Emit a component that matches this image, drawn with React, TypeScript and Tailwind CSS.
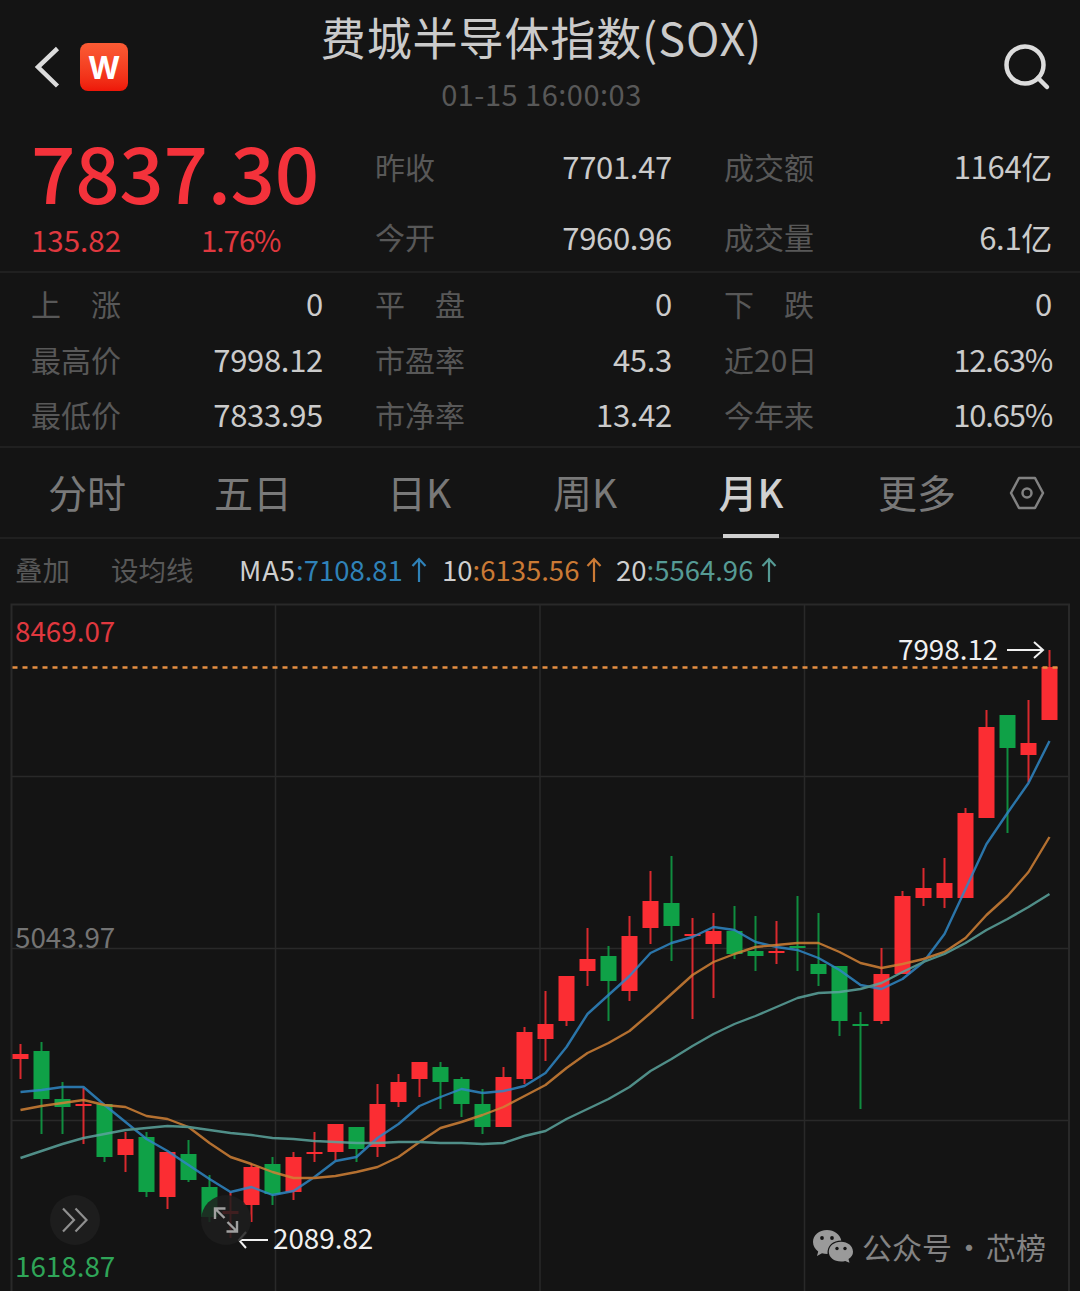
import React from 'react';

type Candle = [up: number, high: number, top: number, bottom: number, low: number];

interface Quote {
  label: string;
  value: string;
}

// 1 = rising month (red), 0 = falling month (green)
const candles: Candle[] = [
  [1, 1044, 1054, 1059, 1079], [0, 1042, 1051, 1099, 1134], [0, 1082, 1099, 1107, 1134],
  [1, 1088, 1104, 1106, 1144], [0, 1104, 1104, 1157, 1162], [1, 1132, 1139, 1155, 1172],
  [0, 1132, 1137, 1192, 1197], [1, 1152, 1152, 1197, 1209], [0, 1140, 1154, 1180, 1182],
  [0, 1175, 1187, 1217, 1222], [1, 1192, 1211, 1214, 1238], [1, 1164, 1167, 1205, 1222],
  [0, 1157, 1164, 1194, 1205], [1, 1152, 1157, 1192, 1200], [1, 1132, 1152, 1154, 1162],
  [1, 1124, 1124, 1152, 1160], [0, 1127, 1127, 1149, 1162], [1, 1084, 1104, 1147, 1157],
  [1, 1074, 1082, 1102, 1107], [1, 1062, 1062, 1079, 1097], [0, 1062, 1067, 1082, 1109],
  [0, 1077, 1079, 1104, 1117], [0, 1089, 1104, 1127, 1134], [1, 1067, 1077, 1127, 1127],
  [1, 1027, 1032, 1079, 1084], [1, 991, 1024, 1039, 1061], [1, 976, 976, 1021, 1026],
  [1, 928, 959, 971, 986], [0, 946, 956, 981, 1021], [1, 916, 936, 991, 1001],
  [1, 871, 901, 928, 944], [0, 856, 903, 926, 961], [1, 918, 934, 936, 1019],
  [1, 913, 931, 944, 998], [0, 906, 931, 954, 959], [0, 916, 951, 956, 971],
  [1, 921, 951, 953, 964], [0, 896, 946, 948, 971], [0, 913, 964, 974, 986],
  [0, 966, 966, 1021, 1036], [0, 1012, 1024, 1026, 1109], [1, 948, 974, 1021, 1024],
  [1, 891, 896, 974, 974], [1, 868, 888, 898, 906], [1, 858, 883, 898, 908],
  [1, 808, 813, 898, 898], [1, 710, 727, 818, 818], [0, 715, 715, 748, 833],
  [1, 700, 743, 755, 782], [1, 650, 667, 720, 720],
];

const ma5 = [
  1092, 1090, 1087, 1087, 1105, 1122, 1139, 1151, 1165, 1179, 1192, 1187, 1195, 1191, 1177, 1161, 1157,
  1138, 1124, 1106, 1097, 1089, 1093, 1091, 1086, 1073, 1047, 1014, 995, 976, 953, 943, 937, 927, 930,
  942, 947, 950, 958, 970, 985, 989, 979, 962, 934, 889, 844, 813, 783, 741,
];
const ma10 = [
  1110, 1106, 1103, 1100, 1105, 1107, 1116, 1119, 1127, 1143, 1157, 1164, 1172, 1178, 1178, 1176, 1172,
  1167, 1157, 1142, 1128, 1122, 1115, 1107, 1096, 1085, 1068, 1053, 1043, 1031, 1013, 994, 975, 962, 954,
  947, 945, 943, 943, 952, 963, 968, 964, 959, 952, 938, 915, 896, 872, 837,
];
const ma20 = [
  1158, 1151, 1144, 1138, 1134, 1130, 1128, 1126, 1127, 1130, 1133, 1135, 1138, 1139, 1141, 1142, 1143,
  1143, 1142, 1142, 1143, 1143, 1144, 1143, 1136, 1131, 1119, 1109, 1099, 1087, 1071, 1059, 1046, 1034,
  1024, 1016, 1007, 998, 993, 992, 989, 983, 972, 962, 954, 943, 930, 919, 907, 894,
];

const xAt = (index: number) => 20.5 + index * 21;
const toPoints = (values: number[]) => values.map((y, i) => `${xAt(i)},${y}`).join(' ');

const topQuotes: Quote[][] = [
  [{ label: '昨收', value: '7701.47' }, { label: '成交额', value: '1164亿' }],
  [{ label: '今开', value: '7960.96' }, { label: '成交量', value: '6.1亿' }],
];

const quotes: Quote[][] = [
  [{ label: '上　涨', value: '0' }, { label: '平　盘', value: '0' }, { label: '下　跌', value: '0' }],
  [{ label: '最高价', value: '7998.12' }, { label: '市盈率', value: '45.3' }, { label: '近20日', value: '12.63%' }],
  [{ label: '最低价', value: '7833.95' }, { label: '市净率', value: '13.42' }, { label: '今年来', value: '10.65%' }],
];

const tabs = ['分时', '五日', '日K', '周K', '月K', '更多'];

const QuoteCell: React.FC<Quote> = ({ label, value }) => (
  <div className="flex items-center justify-between">
    <span className="text-[30px] text-[#585858]">{label}</span>
    <span className={`text-[31px] text-[#cbcbcb] ${value.endsWith('%') ? 'tracking-[-1.2px]' : 'tracking-[-0.3px]'}`}>
      {value}
    </span>
  </div>
);

const Header: React.FC = () => (
  <header className="flex h-[132px] justify-between pl-[34px] pr-[28px]">
    <div className="flex w-[157px] items-center pt-[2px]">
      <svg className="h-[42px] w-[28px]" viewBox="0 0 28 42" fill="none" stroke="#dcdcdc" strokeWidth="4.5">
        <path d="M23.500 2.500L4 21L23.500 40" />
      </svg>
      <div className="ml-[18px] flex h-[48px] w-[48px] items-center justify-center rounded-[8px] bg-gradient-to-b from-[#fb5b34] to-[#ee1608]">
        <span className="font-[Inter,sans-serif] text-[31px] leading-none font-bold text-white">W</span>
      </div>
    </div>
    <div className="flex flex-col items-center">
      <h1 className="h-[74px] text-[45px] leading-[73px] tracking-[0.9px] text-[#cbcbcb]">费城半导体指数(SOX)</h1>
      <p className="h-[38px] text-[29px] leading-[38px] tracking-[0.5px] text-[#585858]">01-15 16:00:03</p>
    </div>
    <div className="flex w-[160px] items-center justify-end">
      <svg className="h-[50px] w-[50px]" viewBox="0 0 50 50" fill="none" stroke="#dcdcdc" strokeWidth="4.500">
        <circle cx="23" cy="24" r="18.500" />
        <path d="M36 37L45 46" strokeLinecap="round" />
      </svg>
    </div>
  </header>
);

const Summary: React.FC = () => (
  <section className="flex h-[141px] border-b-2 border-[#202020] pl-[31px] pr-[28px]">
    <div className="w-[344px]">
      <div className="h-[84px] text-[78px] leading-[77px] font-medium tracking-[-0.3px] text-[#f4323b]">7837.30</div>
      <div className="flex h-[46px] items-center text-[29.500px] text-[#e0383f]">
        <span className="w-[170px]">135.82</span>
        <span className="tracking-[-1px]">1.76%</span>
      </div>
    </div>
    <div className="-mt-px flex-1">
      {topQuotes.map((row, index) => (
        <div key={index} className="grid h-[70.500px] grid-cols-[297px_328px] gap-x-[52px]">
          {row.map((quote) => (
            <QuoteCell key={quote.label} {...quote} />
          ))}
        </div>
      ))}
    </div>
  </section>
);

const Details: React.FC = () => (
  <section className="h-[175px] border-b-2 border-[#202020] pt-[3px] pl-[31px]">
    {quotes.map((row, index) => (
      <div key={index} className="grid h-[55.400px] grid-cols-[292px_297px_328px] gap-x-[52px]">
        {row.map((quote) => (
          <QuoteCell key={quote.label} {...quote} />
        ))}
      </div>
    ))}
  </section>
);

const Tabs: React.FC = () => (
  <nav className="flex h-[91px] items-center border-b-2 border-[#202020] pl-[4px] text-[39px] text-[#797979]">
    {tabs.map((tab) => (
      <div
        key={tab}
        className={`relative flex h-full w-[166px] items-center justify-center pb-[3px] ${
          tab === '月K' ? 'font-medium text-[#d0d0d0]' : ''
        }`}
      >
        {tab}
        {tab === '月K' && <span className="absolute -bottom-px h-[4px] w-[56px] bg-[#d0d0d0]" />}
      </div>
    ))}
    <svg className="ml-[9px] h-[36px] w-[36px]" viewBox="0 0 36 36" fill="none" stroke="#828282" strokeWidth="2.500">
      <path d="M10 3H26L34 18L26 33H10L2 18Z" strokeLinejoin="round" />
      <circle cx="18" cy="18" r="4.500" />
    </svg>
  </nav>
);

const UpArrow: React.FC = () => (
  <svg className="h-[26px] w-[16px]" viewBox="0 0 16 26" fill="none" stroke="currentColor" strokeWidth="2.200">
    <path d="M8 25V3M1.500 9L8 2L14.500 9" />
  </svg>
);

const Averages: React.FC = () => (
  <div className="flex h-[61px] items-center pl-[15px] text-[27.500px] text-[#cfcfcf]">
    <span className="w-[96px] text-[#585858]">叠加</span>
    <span className="w-[128px] text-[#585858]">设均线</span>
    <div className="flex w-[203px] items-center">
      <span className="w-[57px] tracking-[0.8px]">MA5</span>
      <span className="flex items-center text-[#2f82b8]">:7108.81<i className="ml-[8px]"><UpArrow /></i></span>
    </div>
    <div className="flex w-[174px] items-center">
      <span>10</span>
      <span className="flex items-center text-[#cb7a35]">:6135.56<i className="ml-[7px]"><UpArrow /></i></span>
    </div>
    <div className="flex items-center">
      <span>20</span>
      <span className="flex items-center text-[#569b95]">:5564.96<i className="ml-[8px]"><UpArrow /></i></span>
    </div>
  </div>
);

const Chart: React.FC = () => (
  <div className="relative h-[691px]">
    <svg className="block h-[691px] w-[1080px]" viewBox="0 600 1080 691" fill="none">
      {/* Grid */}
      <g stroke="#292929" strokeWidth="2">
        <path d="M11.500 1300V604.500H1069V1300" />
        <path d="M275.500 604V1300M540 604V1300M804.500 604V1300" strokeWidth="1.500" />
        <path d="M11 776.500H1069M11 948.500H1069M11 1120.500H1069" strokeWidth="1.500" />
      </g>

      {candles.map(([up, high, top, bottom, low], i) => {
        const color = up ? '#fb2d33' : '#0fa147';
        return (
          <g key={i} fill={color}>
            <rect x={xAt(i) - 1} y={high} width="2" height={low - high} opacity="0.85" />
            <rect x={xAt(i) - 8} y={top} width="16" height={bottom - top} />
          </g>
        );
      })}

      <path d="M12.500 667.500H1062" stroke="#e58f43" strokeWidth="2.400" strokeDasharray="5 5" />

      <g strokeWidth="2.400" strokeLinejoin="round" opacity="0.85">
        <polyline points={toPoints(ma5)} stroke="#2f86c4" />
        <polyline points={toPoints(ma10)} stroke="#d18136" />
        <polyline points={toPoints(ma20)} stroke="#5ba49d" />
      </g>

      {/* High and low markers */}
      <g stroke="#f0f0f0" strokeWidth="2">
        <path d="M1007 650H1043M1034 642L1043 650L1034 658" />
        <path d="M268 1240H240M246 1232L239 1240L246 1248" />
      </g>
      <g fontSize="27.800">
        <text x="898" y="660" fill="#f0f0f0">7998.12</text>
        <text x="273" y="1249" fill="#f0f0f0">2089.82</text>
        <text x="15" y="642" fill="#e0383f">8469.07</text>
        <text x="15" y="948" fill="#747474">5043.97</text>
        <text x="15" y="1277" fill="#2fa558">1618.87</text>
      </g>
    </svg>

    <button type="button" className="absolute top-[595px] left-[50px] flex h-[50px] w-[50px] items-center justify-center rounded-full bg-[#1d1d1d]">
      <svg className="h-[26px] w-[28px]" viewBox="0 0 28 26" fill="none" stroke="#8f8f8f" strokeWidth="2.200">
        <path d="M2 1.500L13 13L2 24.500M14.500 1.500L25.500 13L14.500 24.500" />
      </svg>
    </button>
    <button type="button" className="absolute top-[595px] left-[201px] flex h-[50px] w-[50px] items-center justify-center rounded-full bg-[#1d1d1d]/85">
      <svg className="h-[26px] w-[26px]" viewBox="0 0 26 26" fill="none" stroke="#a0a0a0" strokeWidth="2.400">
        <path d="M2 12V1.500H12.500M2 1.500L11.500 11M24 14V24.500H13.500M24 24.500L14.500 15" />
      </svg>
    </button>

    <div className="absolute top-[624px] left-[812px] flex items-center text-[30px] leading-[44px] text-[#838383]">
      <svg className="h-[34px] w-[42px]" viewBox="0 0 42 34">
        <path
          fill="#9a9a9a"
          d="M15 1C7 1 1 6.200 1 13C1 17 3 20.200 6.200 22.400L5 27L10 24.200Q12.400 25 15.500 25C15 16.500 21 11.500 29.300 11.500C28 5.400 22.200 1 15 1Z"
        />
        <path
          fill="#9a9a9a"
          d="M29 12.700C22 12.700 16.800 17 16.800 22.700C16.800 28.300 22 32.500 29 32.500Q31.200 32.500 33.200 31.900L37.500 33.700L36.500 30C39.500 28.200 41 25.700 41 22.700C41 17 35.800 12.700 29 12.700Z"
        />
        <g fill="#141414">
          <circle cx="10" cy="9" r="1.900" />
          <circle cx="20" cy="9" r="1.900" />
          <circle cx="25" cy="19.500" r="1.700" />
          <circle cx="33" cy="19.500" r="1.700" />
        </g>
      </svg>
      <span className="ml-[8px]">公众号</span>
      <span className="w-[34px] text-center">·</span>
      <span>芯榜</span>
    </div>
  </div>
);

const App: React.FC = () => {
  return (
    <main className="h-[1291px] w-[1080px] overflow-hidden bg-[#141414] font-['Noto_Sans_CJK_SC',sans-serif]">
      <Header />
      <Summary />
      <Details />
      <Tabs />
      <Averages />
      <Chart />
    </main>
  );
};

export default App;
